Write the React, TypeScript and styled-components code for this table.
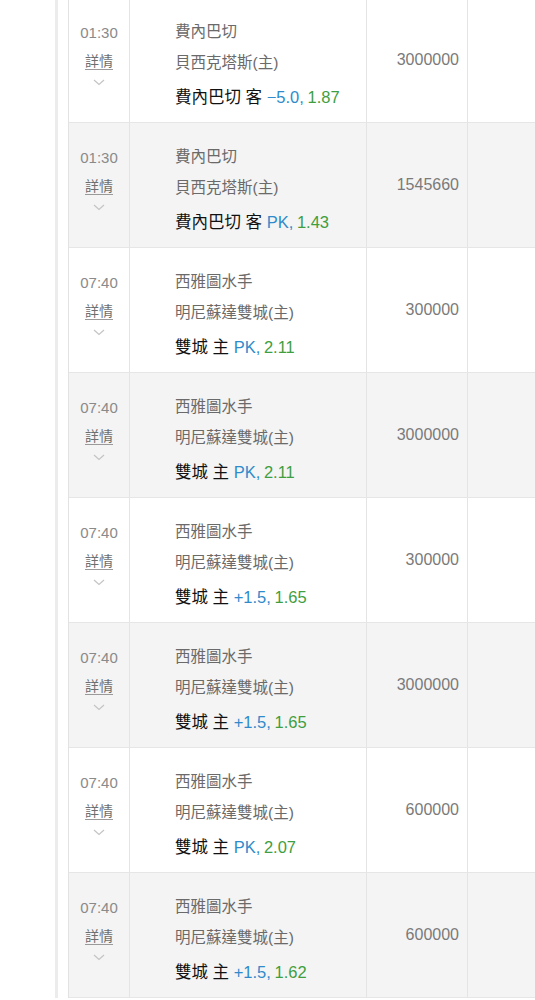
import React from "react";
import styled, { createGlobalStyle } from "styled-components";

const GlobalStyle = createGlobalStyle`
  html, body {
    margin: 0;
    padding: 0;
    background: #ffffff;
    overflow: hidden;
  }
  body {
    font-family: "Liberation Sans", "Noto Sans CJK TC", sans-serif;
  }
`;

type Bet = {
  time: string;
  away: string;
  home: string;
  pick: string;
  line: string;
  odds: string;
  amount: string;
};

const bets: Bet[] = [
  { time: "01:30", away: "費內巴切", home: "貝西克塔斯(主)", pick: "費內巴切 客", line: "−5.0,", odds: "1.87", amount: "3000000" },
  { time: "01:30", away: "費內巴切", home: "貝西克塔斯(主)", pick: "費內巴切 客", line: "PK,", odds: "1.43", amount: "1545660" },
  { time: "07:40", away: "西雅圖水手", home: "明尼蘇達雙城(主)", pick: "雙城 主", line: "PK,", odds: "2.11", amount: "300000" },
  { time: "07:40", away: "西雅圖水手", home: "明尼蘇達雙城(主)", pick: "雙城 主", line: "PK,", odds: "2.11", amount: "3000000" },
  { time: "07:40", away: "西雅圖水手", home: "明尼蘇達雙城(主)", pick: "雙城 主", line: "+1.5,", odds: "1.65", amount: "300000" },
  { time: "07:40", away: "西雅圖水手", home: "明尼蘇達雙城(主)", pick: "雙城 主", line: "+1.5,", odds: "1.65", amount: "3000000" },
  { time: "07:40", away: "西雅圖水手", home: "明尼蘇達雙城(主)", pick: "雙城 主", line: "PK,", odds: "2.07", amount: "600000" },
  { time: "07:40", away: "西雅圖水手", home: "明尼蘇達雙城(主)", pick: "雙城 主", line: "+1.5,", odds: "1.62", amount: "600000" },
];

export default function App() {
  return (
    <>
      <GlobalStyle />
      <Frame>
        <Table>
          {bets.map((b, i) => (
            <Row key={i} $shaded={i % 2 === 1}>
              <TimeCell>
                <Time>{b.time}</Time>
                <DetailLink>詳情</DetailLink>
                <Chevron width="12" height="7" viewBox="0 0 12 7">
                  <path d="M1 1 L6 5.5 L11 1" fill="none" stroke="#c4c4c4" strokeWidth="1.2" />
                </Chevron>
              </TimeCell>
              <MatchCell>
                <Team>{b.away}</Team>
                <Team>{b.home}</Team>
                <Pick>
                  {b.pick} <Line>{b.line}</Line> <Odds>{b.odds}</Odds>
                </Pick>
              </MatchCell>
              <AmountCell>{b.amount}</AmountCell>
              <EmptyCell />
            </Row>
          ))}
        </Table>
      </Frame>
    </>
  );
}

const Frame = styled.div`
  margin-left: 55px;
  border-left: 3px solid #ececec;
  padding-left: 10px;
  min-height: 1000px;
  box-sizing: border-box;
`;

const Table = styled.div`
  width: 560px;
  margin-top: -2px;
  border-left: 1px solid #e2e2e2;
  display: flex;
  flex-direction: column;
`;

const Row = styled.div<{ $shaded: boolean }>`
  display: grid;
  grid-template-columns: 61px 237px 101px 1fr;
  height: 125px;
  box-sizing: border-box;
  border-bottom: 1.5px solid #e6e6e6;
  background: ${(p) => (p.$shaded ? "#f4f4f4" : "#ffffff")};
`;

const TimeCell = styled.div`
  display: flex;
  flex-direction: column;
  align-items: center;
  justify-content: center;
  border-right: 1.5px solid #e4e4e4;
  padding-bottom: 12px;
`;

const Time = styled.span`
  font-size: 15px;
  color: #8a8a8a;
  line-height: 20px;
`;

const DetailLink = styled.a`
  margin-top: 9px;
  font-size: 14px;
  line-height: 18px;
  color: #6e6e6e;
  text-decoration: underline;
  text-underline-offset: 3px;
  text-decoration-color: #9a9a9a;
`;

const Chevron = styled.svg`
  margin-top: 9px;
`;

const MatchCell = styled.div`
  display: flex;
  flex-direction: column;
  justify-content: center;
  padding-left: 45px;
  padding-top: 7px;
  border-right: 1.5px solid #e4e4e4;
`;

const Team = styled.div`
  font-size: 15.5px;
  line-height: 31px;
  color: #6a6a6a;
`;

const Pick = styled.div`
  margin-top: 4px;
  font-size: 16.5px;
  line-height: 30px;
  color: #111111;
  font-weight: 400;
  white-space: nowrap;
`;

const Line = styled.span`
  color: #2f8bcb;
`;

const Odds = styled.span`
  color: #3f9e3f;
  margin-left: -1px;
`;

const AmountCell = styled.div`
  display: flex;
  align-items: center;
  justify-content: flex-end;
  padding-right: 8px;
  font-size: 16px;
  color: #7a7a7a;
  border-right: 1.5px solid #e4e4e4;
`;

const EmptyCell = styled.div``;
